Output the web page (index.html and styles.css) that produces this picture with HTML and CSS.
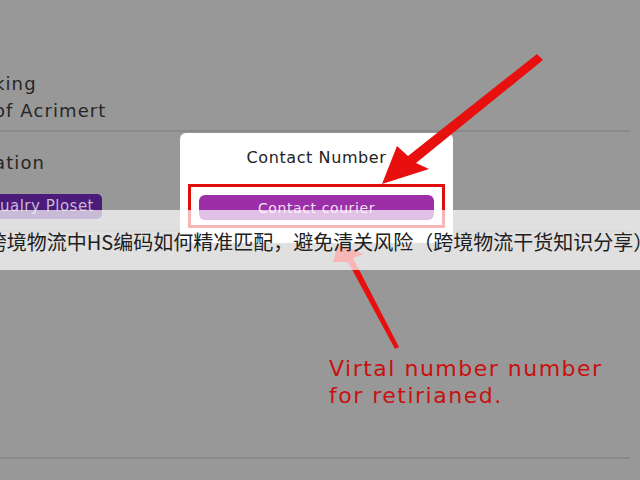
FILE: index.html
```html
<!DOCTYPE html>
<html lang="en">
<head>
  <meta charset="UTF-8" />
  <meta name="viewport" content="width=device-width, initial-scale=1.0"/>
  <title>Contact Number</title>
  <link rel="stylesheet" href="styles.css">
</head>
<body>
  <div class="sheet">
    <div class="row row-top">
      <div class="label">king</div>
      <div class="label">of Acrimert</div>
    </div>
    <div class="row row-mid">
      <div class="label">ation</div>
      <span class="badge">ualry Ploset</span>
    </div>
    <div class="row row-empty"></div>
  </div>

  <!-- popup over the list -->
  <div class="modal">
    <div class="modal-title">Contact Number</div>
    <div class="highlight">
      <button class="btn-courier">Contact courier</button>
    </div>
  </div>

  <svg class="arrows" width="640" height="480" viewBox="0 0 640 480">
    <polygon fill="#e8100f" points="537,54 543,60 416,163 429,169 382,184 397,146 408,156"/>
    <polygon fill="#e8100f" points="399,347 395,349 348,262 333,262 338,244 364,254 353,258"/>
  </svg>

  <div class="note">Virtal number number<br>for retirianed.</div>

  <div class="caption">
    <span>跨境物流中HS编码如何精准匹配，避免清关风险（跨境物流干货知识分享）</span>
  </div>
</body>
</html>
```
FILE: styles.css
```css
body {
  margin: 0;
  width: 640px;
  height: 480px;
  overflow: hidden;
  background: #989898;
  font-family: "DejaVu Sans", "Liberation Sans", sans-serif;
  position: relative;
}

.sheet {
  display: flex;
  flex-direction: column;
  padding-top: 70px;
}

.row {
  border-bottom: 2px solid #8a8a8a;
  margin-right: 10px;
}

.row-top {
  height: 60px;
}

.row-mid {
  height: 100px;
  padding-top: 17px;
  box-sizing: border-box;
}

.row-empty {
  height: 225px;
}

.label {
  margin-left: -6px;
  font-size: 18px;
  line-height: 27px;
  letter-spacing: 1.1px;
  color: #262626;
}

.badge {
  display: inline-block;
  margin-top: 18px;
  padding: 3px 8px 4px 0;
  background: #4a1b78;
  color: #c6b8d6;
  font-size: 15px;
  letter-spacing: 0.5px;
  border-radius: 0 5px 5px 0;
}

.modal {
  position: absolute;
  left: 180px;
  top: 133px;
  width: 273px;
  height: 110px;
  background: #fff;
  border-radius: 6px;
  display: flex;
  flex-direction: column;
  align-items: center;
}

.modal-title {
  margin-top: 15px;
  font-size: 16px;
  letter-spacing: 0.6px;
  color: #222;
}

.highlight {
  margin-top: 17px;
  width: 257px;
  padding: 8px 8px 5px 8px;
  border: 3px solid #e00d0d;
  box-sizing: border-box;
}

.btn-courier {
  display: block;
  width: 100%;
  height: 25px;
  border: none;
  border-radius: 6px;
  background: #9c2fa8;
  color: #f0dff2;
  font-family: inherit;
  font-size: 14px;
  letter-spacing: 0.6px;
}

.arrows {
  position: absolute;
  left: 0;
  top: 0;
}

.note {
  position: absolute;
  left: 329px;
  top: 355px;
  font-size: 22px;
  line-height: 27px;
  letter-spacing: 1.5px;
  color: #c8100f;
}

.caption {
  position: absolute;
  left: 0;
  top: 210px;
  width: 640px;
  height: 60px;
  background: rgba(255, 255, 255, 0.7);
  display: flex;
  justify-content: center;
  align-items: center;
  overflow: hidden;
}

.caption span {
  white-space: nowrap;
  font-family: "Noto Sans CJK SC", sans-serif;
  font-size: 20px;
  color: #202020;
  margin-top: 2px;
}
```
